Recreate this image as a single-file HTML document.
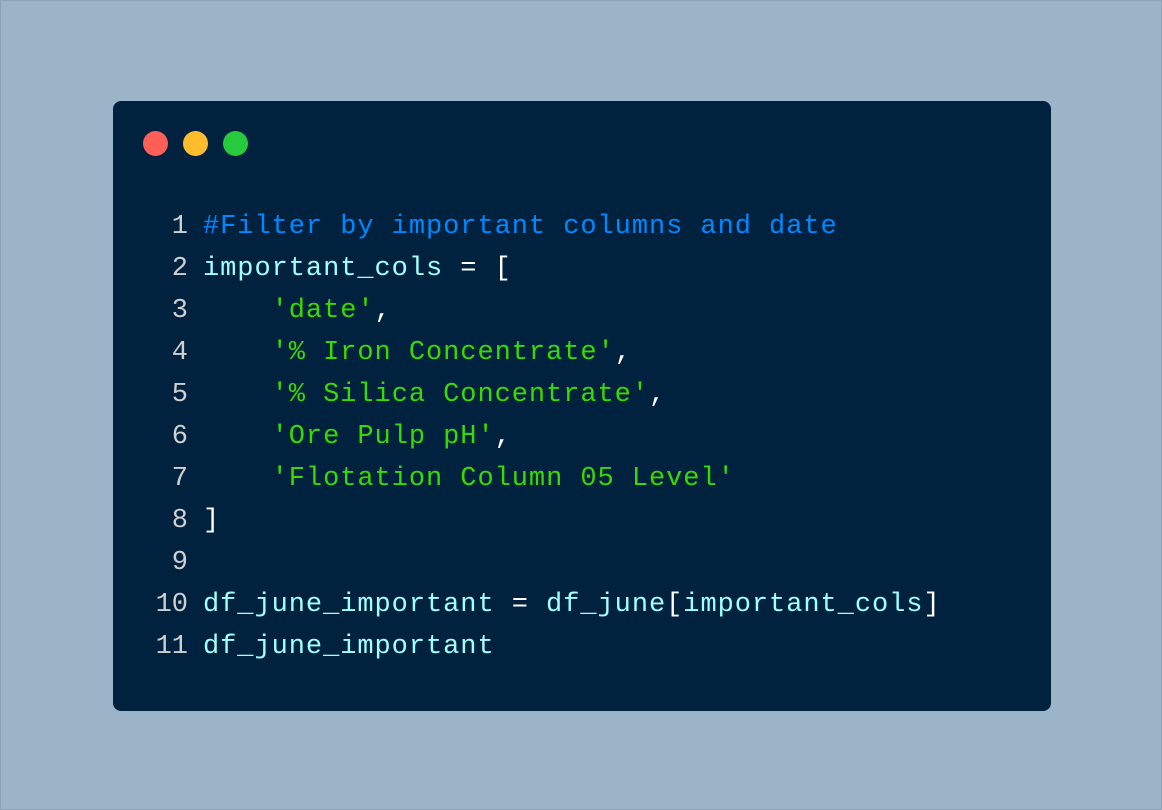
<!DOCTYPE html>
<html><head><style>
html,body{margin:0;padding:0}
body{width:1162px;height:810px;background:#9bb4c8;position:relative;overflow:hidden;box-sizing:border-box;border:1px solid #8aa3b7}
.card{position:absolute;left:112px;top:100px;width:938px;height:610px;background:#00223f;border-radius:8px}
.dot{position:absolute;top:130px;width:25px;height:25px;border-radius:50%}
pre{position:absolute;left:139px;top:205px;margin:0;font-family:"Liberation Mono",monospace;font-size:27px;line-height:42px;letter-spacing:0.95px;color:#a0ffff}
.n{color:#d0d0d0;display:inline-block;width:48px;text-align:right;margin-right:15px;letter-spacing:0}
.c{color:#0088ff}.s{color:#3ad900}.w{color:#ffffff}
</style></head><body>
<div class="card"></div>
<div class="dot" style="left:142px;background:#ff5f56"></div>
<div class="dot" style="left:182px;background:#ffbd2e"></div>
<div class="dot" style="left:222px;background:#27c93f"></div>
<pre><span class="n">1</span><span class="c">#Filter by important columns and date</span>
<span class="n">2</span>important_cols <span class="w">= [</span>
<span class="n">3</span>    <span class="s">'date'</span><span class="w">,</span>
<span class="n">4</span>    <span class="s">'% Iron Concentrate'</span><span class="w">,</span>
<span class="n">5</span>    <span class="s">'% Silica Concentrate'</span><span class="w">,</span>
<span class="n">6</span>    <span class="s">'Ore Pulp pH'</span><span class="w">,</span>
<span class="n">7</span>    <span class="s">'Flotation Column 05 Level'</span>
<span class="n">8</span><span class="w">]</span>
<span class="n">9</span>
<span class="n">10</span>df_june_important <span class="w">=</span> df_june<span class="w">[</span>important_cols<span class="w">]</span>
<span class="n">11</span>df_june_important</pre>
</body></html>
